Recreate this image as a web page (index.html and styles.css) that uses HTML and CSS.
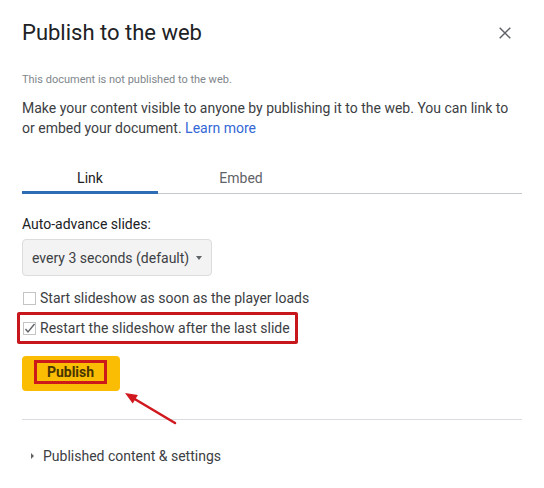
FILE: index.html
```html
<!DOCTYPE html>
<html lang="en">
<head>
<meta charset="utf-8">
<title>Publish to the web</title>
<link rel="stylesheet" href="styles.css">
</head>
<body>
<div class="dialog">
  <div class="header">
    <h1 class="title">Publish to the web</h1>
    <svg class="close" width="12" height="12" viewBox="0 0 12 12" aria-label="Close">
      <path d="M0.7 0.7 L11.3 11.3 M11.3 0.7 L0.7 11.3" stroke="#5f6368" stroke-width="1.5" fill="none"/>
    </svg>
  </div>
  <p class="note">This document is not published to the web.</p>
  <p class="desc">Make your content visible to anyone by publishing it to the web. You can link to or embed your document. <a class="learn" href="#">Learn more</a></p>

  <div class="tabs">
    <div class="tab active">Link</div>
    <div class="tab">Embed</div>
  </div>

  <div class="label">Auto-advance slides:</div>
  <div class="select">
    <span>every 3 seconds (default)</span>
    <span class="caret"></span>
  </div>

  <div class="check-row">
    <span class="box"></span>
    <span>Start slideshow as soon as the player loads</span>
  </div>
  <div class="check-row annot">
    <span class="box">
      <svg width="13" height="13" viewBox="0 0 13 13"><path d="M2.5 7 L5 10 L11.5 2" stroke="#5f6368" stroke-width="1.4" fill="none"/></svg>
    </span>
    <span>Restart the slideshow after the last slide</span>
  </div>

  <div class="publish-wrap">
    <div class="publish"><span class="publish-label">Publish</span></div>
    <svg class="arrow" width="60" height="40" viewBox="0 0 60 40">
      <path d="M53 34 L11 9" stroke="#d0181e" stroke-width="2.6" fill="none" stroke-linecap="round"/>
      <path d="M3 4 L15.9 5.9 L10.7 14.5 Z" fill="#d0181e"/>
    </svg>
  </div>

  <div class="divider"></div>

  <div class="expander">
    <span class="tri"></span>
    <span>Published content &amp; settings</span>
  </div>
</div>
</body>
</html>
```
FILE: styles.css
```css
* { box-sizing: border-box; }
html, body {
  margin: 0;
  padding: 0;
  background: #ffffff;
}
body {
  font-family: Roboto, "Liberation Sans", Arial, sans-serif;
  color: #3c4043;
}
.dialog {
  width: 544px;
  padding: 19px 22px 0 22px;
}
.header {
  display: flex;
  align-items: center;
  justify-content: space-between;
  width: 500px;
}
.title {
  margin: 0;
  font-size: 22px;
  line-height: 28px;
  font-weight: 400;
  color: #202124;
}
.close {
  margin-right: 11px;
  margin-top: -1px;
}
.note {
  margin: 25px 0 0 0;
  font-size: 11px;
  line-height: 16px;
  color: #80868b;
}
.desc {
  margin: 10px 0 0 0;
  width: 500px;
  font-size: 14px;
  line-height: 20px;
  color: #3c4043;
}
.learn {
  color: #3367d6;
  text-decoration: none;
}
.tabs {
  display: flex;
  width: 500px;
  margin-top: 30px;
  border-bottom: 1px solid #c6c9cc;
}
.tab {
  width: 136px;
  text-align: center;
  font-size: 14px;
  line-height: 20px;
  font-weight: 400;
  color: #5f6368;
  padding-bottom: 5px;
}
.tab + .tab {
  margin-left: 15px;
}
.tab.active {
  color: #202124;
  box-shadow: inset 0 -3px 0 #2d6db5;
  margin-bottom: -1px;
  padding-bottom: 6px;
}
.label {
  margin-top: 20px;
  font-size: 14px;
  line-height: 20px;
  color: #202124;
}
.select {
  margin-top: 5px;
  width: 190px;
  height: 37px;
  display: flex;
  align-items: center;
  justify-content: space-between;
  padding: 0 9px 0 9px;
  background: #f3f3f3;
  border: 1px solid #dcdcdc;
  border-radius: 4px;
  font-size: 14px;
  color: #3c4043;
}
.caret {
  width: 0;
  height: 0;
  border-left: 3.5px solid transparent;
  border-right: 3.5px solid transparent;
  border-top: 4px solid #5f6368;
  margin-right: 0;
}
.check-row {
  display: flex;
  align-items: center;
  gap: 4px;
  margin-top: 12px;
  font-size: 14px;
  line-height: 20px;
  color: #3c4043;
  padding-left: 1px;
}
.box {
  width: 13px;
  height: 13px;
  border: 1px solid #c4c4c4;
  background: #ffffff;
  display: flex;
  align-items: center;
  justify-content: center;
  flex: none;
  margin-top: 1px;
}
.box svg {
  display: block;
  margin: -1px;
}
.annot {
  width: fit-content;
  margin-top: 4px;
  margin-left: -5px;
  padding: 3px 5px 3px 3px;
  border: 3px solid #c8161d;
  border-radius: 2px;
}
.publish-wrap {
  position: relative;
  margin-top: 12px;
  width: 98px;
}
.publish {
  width: 98px;
  height: 35px;
  background: #fbbc04;
  border-radius: 4px;
  padding: 4px 0 0 12px;
}
.publish-label {
  display: flex;
  align-items: center;
  justify-content: center;
  width: 73px;
  height: 24px;
  border: 3px solid #cc1a1a;
  font-size: 14px;
  font-weight: 700;
  color: #4a3600;
}
.arrow {
  position: absolute;
  left: 100px;
  top: 33px;
}
.divider {
  margin-top: 28px;
  width: 500px;
  height: 1px;
  background: #dadce0;
}
.expander {
  display: flex;
  align-items: center;
  margin-top: 26px;
  font-size: 14px;
  line-height: 20px;
  color: #3c4043;
}
.tri {
  width: 0;
  height: 0;
  border-top: 3px solid transparent;
  border-bottom: 3px solid transparent;
  border-left: 3px solid #5f6368;
  margin-left: 9px;
  margin-right: 9px;
}
```
